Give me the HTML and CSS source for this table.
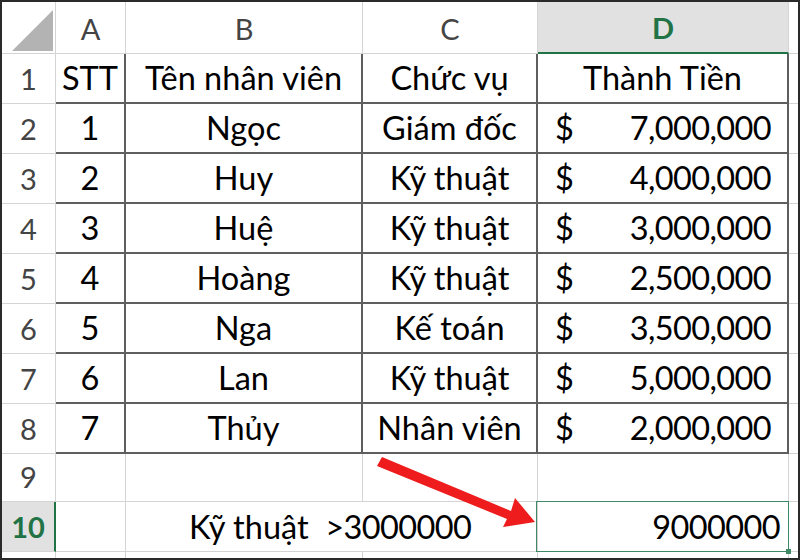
FILE: index.html
```html
<!DOCTYPE html>
<html lang="vi">
<head>
<meta charset="utf-8">
<title>Sheet</title>
<link rel="stylesheet" href="styles.css">
</head>
<body>
<div class="frame">
  <div class="sheet">
    <!-- header row -->
    <div class="c corner"><svg class="tri" width="42" height="42" viewBox="0 0 42 42"><polygon points="0,41 41,0 41,41" fill="#b3b3b3"/></svg></div>
    <div class="c ch">A</div>
    <div class="c ch">B</div>
    <div class="c ch">C</div>
    <div class="c ch sel">D</div>
    <div class="c ch last"></div>

    <!-- row 1 -->
    <div class="c rh">1</div>
    <div class="c d ctr">STT</div>
    <div class="c d ctr">Tên nhân viên</div>
    <div class="c d ctr">Chức vụ</div>
    <div class="c d ctr">Thành Tiền</div>
    <div class="c e"></div>

    <div class="c rh">2</div>
    <div class="c d ctr">1</div>
    <div class="c d ctr">Ngọc</div>
    <div class="c d ctr">Giám đốc</div>
    <div class="c d money"><span>$</span><span class="num">7,000,000</span></div>
    <div class="c e"></div>

    <div class="c rh">3</div>
    <div class="c d ctr">2</div>
    <div class="c d ctr">Huy</div>
    <div class="c d ctr">Kỹ thuật</div>
    <div class="c d money"><span>$</span><span class="num">4,000,000</span></div>
    <div class="c e"></div>

    <div class="c rh">4</div>
    <div class="c d ctr">3</div>
    <div class="c d ctr">Huệ</div>
    <div class="c d ctr">Kỹ thuật</div>
    <div class="c d money"><span>$</span><span class="num">3,000,000</span></div>
    <div class="c e"></div>

    <div class="c rh">5</div>
    <div class="c d ctr">4</div>
    <div class="c d ctr">Hoàng</div>
    <div class="c d ctr">Kỹ thuật</div>
    <div class="c d money"><span>$</span><span class="num">2,500,000</span></div>
    <div class="c e"></div>

    <div class="c rh">6</div>
    <div class="c d ctr">5</div>
    <div class="c d ctr">Nga</div>
    <div class="c d ctr">Kế toán</div>
    <div class="c d money"><span>$</span><span class="num">3,500,000</span></div>
    <div class="c e"></div>

    <div class="c rh">7</div>
    <div class="c d ctr">6</div>
    <div class="c d ctr">Lan</div>
    <div class="c d ctr">Kỹ thuật</div>
    <div class="c d money"><span>$</span><span class="num">5,000,000</span></div>
    <div class="c e"></div>

    <div class="c rh">8</div>
    <div class="c d ctr">7</div>
    <div class="c d ctr">Thủy</div>
    <div class="c d ctr">Nhân viên</div>
    <div class="c d money"><span>$</span><span class="num">2,000,000</span></div>
    <div class="c e"></div>

    <!-- row 9 -->
    <div class="c rh">9</div>
    <div class="c g"></div>
    <div class="c g"></div>
    <div class="c g"></div>
    <div class="c g"></div>
    <div class="c g e"></div>

    <!-- row 10 -->
    <div class="c rh rsel">10</div>
    <div class="c g"></div>
    <div class="c g span2 crit">Kỹ thuật&nbsp;&nbsp;<span class="num">&gt;3000000</span></div>
    <div class="c g result"><span class="num">9000000</span></div>
    <div class="c g e"></div>

    <!-- bottom partial row -->
    <div class="c rh tail"></div>
    <div class="c g tail"></div>
    <div class="c g tail"></div>
    <div class="c g tail"></div>
    <div class="c g tail"></div>
    <div class="c g tail e"></div>
  </div>
  <svg class="arrow" width="800" height="560" viewBox="0 0 800 560">
    <polygon points="377,466 382,457 511,511 515,498 535,522 503,527 507,519" fill="#ee1c1c"/>
  </svg>
</div>
</body>
</html>
```
FILE: styles.css
```css
* { box-sizing: border-box; }
html, body { margin: 0; padding: 0; background: #fff; }
.frame {
  position: relative;
  width: 800px;
  height: 560px;
  border: 2px solid #2a2a2a;
  overflow: hidden;
  font-family: Lato, "Open Sans", sans-serif;
}
.sheet {
  display: grid;
  grid-template-columns: 54px 70px 237px 175px 251px 9px;
  grid-template-rows: 52px 50px 50px 50px 50px 50px 50px 50px 50px 48px 50px 6px;
  width: 796px;
  height: 556px;
}
.c {
  display: flex;
  align-items: flex-end;
  justify-content: center;
  border-right: 1px solid #d4d4d4;
  border-bottom: 1px solid #d4d4d4;
  font-size: 32.5px;
  line-height: 1;
  color: #000;
  padding-bottom: 8px;
  white-space: nowrap;
  position: relative;
}
.num { letter-spacing: -0.6px; }
.corner { align-items: flex-start; justify-content: flex-start; padding: 8px 0 0 10px; }
.ch { color: #444; font-size: 29px; padding-bottom: 10px; }
.ch.sel {
  background: #e1e1e1;
  color: #217346;
  font-weight: 700;
  border-bottom: 2px solid #217346;
}
.ch.last { border-right: none; }
.rh { color: #444; font-size: 29px; padding-bottom: 10px; }
.rsel {
  background: #e1e1e1;
  color: #217346;
  font-weight: 700;
  border-right: 2px solid #217346;
}
.d {
  border-right: 2px solid #5e5e5e;
  border-bottom: 2px solid #5e5e5e;
}
.money { justify-content: space-between; padding: 0 16px 8px 17px; }
.e { border-right: none; }
.span2 { grid-column: span 2; }
.crit { justify-content: flex-start; padding-left: 63px; }
.result {
  justify-content: flex-end;
  padding-right: 8px;
}
.result::after {
  content: "";
  position: absolute;
  left: -2px;
  top: -1px;
  right: -1px;
  bottom: -1px;
  border: 1px solid #3f8a66;
}
.result::before {
  content: "";
  position: absolute;
  right: -3px;
  bottom: -3px;
  width: 5px;
  height: 5px;
  background: #3f8a66;
  z-index: 2;
}
.tail { padding: 0; border-bottom: none; }
.arrow { position: absolute; left: -2px; top: -2px; pointer-events: none; }
```
